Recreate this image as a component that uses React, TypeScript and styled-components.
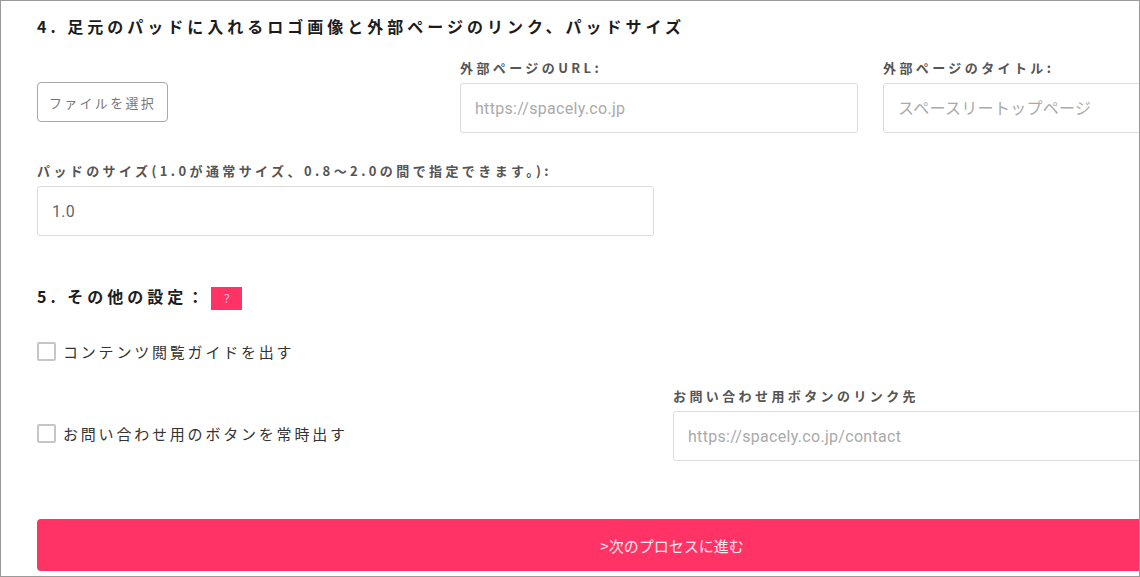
import React from 'react';
import styled, { createGlobalStyle } from 'styled-components';

const GlobalStyle = createGlobalStyle`
  html, body {
    margin: 0;
    padding: 0;
    background: #fff;
    font-family: "Noto Sans CJK JP", "Noto Sans", sans-serif;
  }
`;

const Frame = styled.div`
  width: 1140px;
  height: 577px;
  box-sizing: border-box;
  border: 1px solid #9a9a9a;
  overflow: hidden;
  background: #fff;
`;

const Form = styled.div`
  width: 1270px;
  padding-left: 36px;
  box-sizing: content-box;
`;

const Heading = styled.h2<{ top?: number }>`
  margin: ${props => props.top || 0}px 0 0 0;
  font-size: 16px;
  line-height: 24px;
  font-weight: 700;
  letter-spacing: 4px;
  color: #1c1c1c;
  font-family: "Noto Sans CJK JP", "Noto Sans", sans-serif;
`;

const HeadingRow = styled.div`
  display: flex;
  align-items: flex-start;
  margin-top: 48px;
`;

const HelpBadge = styled.span`
  display: inline-flex;
  align-items: center;
  justify-content: center;
  width: 31px;
  height: 23px;
  margin: 3px 0 0 4px;
  background: #ff3366;
  color: rgba(255, 255, 255, 0.65);
  font-size: 12px;
  font-family: "Noto Sans", sans-serif;
`;

const ThreeCol = styled.div`
  display: grid;
  grid-template-columns: 398px 398px 398px;
  column-gap: 25px;
  align-items: start;
  margin-top: 20px;
`;

const TwoCol = styled.div<{ top: number }>`
  display: grid;
  grid-template-columns: 617px 617px;
  column-gap: 19px;
  margin-top: ${props => props.top}px;
`;

const Field = styled.div`
  display: flex;
  flex-direction: column;
`;

const Label = styled.label`
  font-size: 13px;
  line-height: 20px;
  font-weight: 700;
  letter-spacing: 3.4px;
  color: #555;
  margin-bottom: 5px;
`;

const TextInput = styled.input`
  height: 50px;
  box-sizing: border-box;
  border: 1px solid #dcdcdc;
  border-radius: 3px;
  padding: 0 14px;
  font-size: 16px;
  letter-spacing: 0.3px;
  color: #666;
  font-family: Roboto, "Noto Sans CJK JP", sans-serif;
  outline: none;
  width: 100%;

  &::placeholder {
    color: #aaa;
  }
`;

const FileButton = styled.button`
  margin-top: 24px;
  width: 131px;
  height: 40px;
  background: #fff;
  border: 1px solid #a8a8a8;
  border-radius: 4px;
  font-size: 13px;
  letter-spacing: 2.3px;
  color: #777;
  font-family: "Noto Sans CJK JP", sans-serif;
  padding: 0;
`;

const CheckRow = styled.label<{ top?: number }>`
  display: flex;
  align-items: center;
  height: 24px;
  margin-top: ${props => props.top || 0}px;
  font-size: 15px;
  letter-spacing: 2.8px;
  color: #333;
`;

const CheckLeft = styled.div`
  align-self: end;
  margin-bottom: 16px;
`;

const Check = styled.input`
  appearance: none;
  width: 19px;
  height: 19px;
  margin: 0 7px 0 0;
  box-sizing: border-box;
  border: 2px solid #c6c6c6;
  border-radius: 2px;
  background: #fff;
`;

const NextButton = styled.button`
  display: block;
  width: 100%;
  height: 52px;
  margin-top: 58px;
  border: none;
  border-radius: 4px;
  background: #ff3366;
  color: #ffe6ec;
  font-size: 15px;
  font-family: "Noto Sans CJK JP", sans-serif;
`;

export default function App() {
  return (
    <Frame>
      <GlobalStyle />
      <Form>
        <Heading top={13}>4. 足元のパッドに入れるロゴ画像と外部ページのリンク、パッドサイズ</Heading>
        <ThreeCol>
          <Field>
            <FileButton>ファイルを選択</FileButton>
          </Field>
          <Field>
            <Label>外部ページのURL:</Label>
            <TextInput placeholder="https://spacely.co.jp" />
          </Field>
          <Field>
            <Label>外部ページのタイトル:</Label>
            <TextInput placeholder="スペースリートップページ" />
          </Field>
        </ThreeCol>
        <TwoCol top={28}>
          <Field>
            <Label>パッドのサイズ(1.0が通常サイズ、0.8～2.0の間で指定できます。):</Label>
            <TextInput defaultValue="1.0" />
          </Field>
        </TwoCol>
        <HeadingRow>
          <Heading>5. その他の設定：</Heading>
          <HelpBadge>?</HelpBadge>
        </HeadingRow>
        <CheckRow top={29}>
          <Check type="checkbox" />
          コンテンツ閲覧ガイドを出す
        </CheckRow>
        <TwoCol top={23}>
          <CheckLeft>
            <CheckRow>
              <Check type="checkbox" />
              お問い合わせ用のボタンを常時出す
            </CheckRow>
          </CheckLeft>
          <Field>
            <Label>お問い合わせ用ボタンのリンク先</Label>
            <TextInput placeholder="https://spacely.co.jp/contact" />
          </Field>
        </TwoCol>
        <NextButton>&gt;次のプロセスに進む</NextButton>
      </Form>
    </Frame>
  );
}
